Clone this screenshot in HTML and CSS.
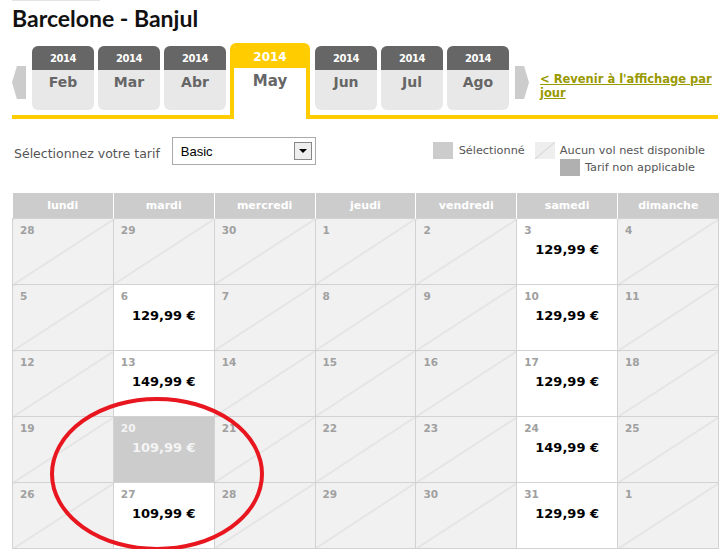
FILE: index.html
```html
<!DOCTYPE html>
<html>
<head>
<meta charset="UTF-8">
<title>Barcelone - Banjul</title>
<link rel="stylesheet" href="styles.css">
</head>
<body>

<div class="page">
  <div class="top-rule"></div>
  <h1 class="route">Barcelone - Banjul</h1>

  <div class="months">
    <div class="arrow arrow-left"></div>
    <div class="tab"><div class="tab-year">2014</div><div class="tab-month">Feb</div></div>
    <div class="tab"><div class="tab-year">2014</div><div class="tab-month">Mar</div></div>
    <div class="tab"><div class="tab-year">2014</div><div class="tab-month">Abr</div></div>
    <div class="tab tab-active"><div class="tab-year">2014</div><div class="tab-month">May</div></div>
    <div class="tab"><div class="tab-year">2014</div><div class="tab-month">Jun</div></div>
    <div class="tab"><div class="tab-year">2014</div><div class="tab-month">Jul</div></div>
    <div class="tab"><div class="tab-year">2014</div><div class="tab-month">Ago</div></div>
    <div class="arrow arrow-right"></div>
    <a class="back-link" href="#">&lt; Revenir à l'affichage par jour</a>
  </div>

  <div class="fare-row">
    <div class="fare-pick">
      <span class="fare-label">Sélectionnez votre tarif</span>
      <div class="fare-select">
        <span>Basic</span>
        <span class="fare-btn"><span class="fare-caret"></span></span>
      </div>
    </div>
    <div class="legend">
      <div class="legend-line">
        <span class="sw sw-selected"></span><span class="legend-text">Sélectionné</span>
        <span class="sw sw-none"></span><span class="legend-text">Aucun vol nest disponible</span>
      </div>
      <div class="legend-line legend-line-2">
        <span class="sw sw-na"></span><span class="legend-text">Tarif non applicable</span>
      </div>
    </div>
  </div>

  <table class="cal">
    <thead>
      <tr><th>lundi</th><th>mardi</th><th>mercredi</th><th>jeudi</th><th>vendredi</th><th>samedi</th><th>dimanche</th></tr>
    </thead>
    <tbody>
      <tr>
        <td class="off"><span class="day">28</span></td>
        <td class="off"><span class="day">29</span></td>
        <td class="off"><span class="day">30</span></td>
        <td class="off"><span class="day">1</span></td>
        <td class="off"><span class="day">2</span></td>
        <td><span class="day">3</span><div class="price">129,99 €</div></td>
        <td class="off"><span class="day">4</span></td>
      </tr>
      <tr>
        <td class="off"><span class="day">5</span></td>
        <td><span class="day">6</span><div class="price">129,99 €</div></td>
        <td class="off"><span class="day">7</span></td>
        <td class="off"><span class="day">8</span></td>
        <td class="off"><span class="day">9</span></td>
        <td><span class="day">10</span><div class="price">129,99 €</div></td>
        <td class="off"><span class="day">11</span></td>
      </tr>
      <tr>
        <td class="off"><span class="day">12</span></td>
        <td><span class="day">13</span><div class="price">149,99 €</div></td>
        <td class="off"><span class="day">14</span></td>
        <td class="off"><span class="day">15</span></td>
        <td class="off"><span class="day">16</span></td>
        <td><span class="day">17</span><div class="price">129,99 €</div></td>
        <td class="off"><span class="day">18</span></td>
      </tr>
      <tr>
        <td class="off"><span class="day">19</span></td>
        <td class="picked"><span class="day">20</span><div class="price">109,99 €</div></td>
        <td class="off"><span class="day">21</span></td>
        <td class="off"><span class="day">22</span></td>
        <td class="off"><span class="day">23</span></td>
        <td><span class="day">24</span><div class="price">149,99 €</div></td>
        <td class="off"><span class="day">25</span></td>
      </tr>
      <tr>
        <td class="off"><span class="day">26</span></td>
        <td><span class="day">27</span><div class="price">109,99 €</div></td>
        <td class="off"><span class="day">28</span></td>
        <td class="off"><span class="day">29</span></td>
        <td class="off"><span class="day">30</span></td>
        <td><span class="day">31</span><div class="price">129,99 €</div></td>
        <td class="off"><span class="day">1</span></td>
      </tr>
    </tbody>
  </table>

  <!-- hand-drawn circle around the cheap days -->
  <svg class="scribble" width="220" height="160" viewBox="0 0 220 160">
    <ellipse cx="107" cy="78" rx="105" ry="75" fill="none" stroke="#e8161f" stroke-width="4"/>
  </svg>
</div>

</body>
</html>
```

FILE: styles.css
```css
/* base */
body {
  margin: 0;
  font-family: "DejaVu Sans", Verdana, sans-serif;
  color: #555555;
  background: #ffffff;
}

.page {
  position: relative;
  padding: 0 10px 0 12px;
}

.top-rule {
  width: 88px;
  height: 1px;
  background: #e4e4e4;
}

.route {
  margin: 4px 0 0 0;
  font-family: Lato, "DejaVu Sans", sans-serif;
  font-size: 23px;
  font-weight: bold;
  line-height: 26px;
  color: #111111;
}

/* month tabs */
.months {
  display: flex;
  align-items: flex-start;
  height: 72px;
  margin-top: 12px;
  border-bottom: 4px solid #ffcc00;
}

.arrow {
  flex-shrink: 0;
  width: 14px;
  height: 33px;
  margin-top: 23px;
  background: #cccccc;
}

.arrow-left {
  margin-right: 6px;
  clip-path: polygon(35% 0, 100% 0, 100% 100%, 35% 100%, 0 50%);
}

.arrow-right {
  margin-left: 2px;
  clip-path: polygon(0 0, 65% 0, 100% 50%, 65% 100%, 0 100%);
}

.tab {
  flex-shrink: 0;
  width: 62px;
  height: 64px;
  margin: 3px 4px 0 0;
  border-radius: 6px;
  background: #e8e8e8;
  overflow: hidden;
  text-align: center;
  font-weight: bold;
}

.tab-year {
  height: 24px;
  line-height: 25px;
  background: #666666;
  color: #ffffff;
  font-size: 10px;
  letter-spacing: -0.4px;
}

.tab-month {
  padding-top: 4px;
  font-size: 14px;
  color: #666666;
}

.tab-active {
  width: 72px;
  height: 72px;
  margin: 0 5px -4px 0;
  border: 4px solid #ffcc00;
  border-bottom: 0;
  border-radius: 6px 6px 0 0;
  background: #ffffff;
}

.tab-active .tab-year {
  height: 21px;
  line-height: 20px;
  background: #ffcc00;
  font-size: 12px;
  letter-spacing: 0;
}

.tab-active .tab-month {
  padding-top: 4px;
  font-size: 15px;
}

.back-link {
  flex: 1;
  margin: 29px 0 0 11px;
  font-size: 11.5px;
  font-weight: bold;
  line-height: 14px;
  color: #999900;
}

/* fare picker + legend */
.fare-row {
  display: flex;
  justify-content: space-between;
  margin-top: 18px;
  height: 56px;
}

.fare-pick {
  display: flex;
  align-items: flex-start;
}

.fare-label {
  margin: 9px 12px 0 2px;
  font-size: 12.5px;
}

.fare-select {
  display: flex;
  align-items: center;
  justify-content: space-between;
  width: 131px;
  height: 26px;
  padding: 0 3px 0 8px;
  border: 1px solid #aaaaaa;
  font-family: "Liberation Sans", Arial, sans-serif;
  font-size: 13px;
  color: #000000;
}

.fare-btn {
  display: flex;
  align-items: center;
  justify-content: center;
  width: 16px;
  height: 16px;
  border: 1px solid #888888;
  background: #eeeeee;
}

.fare-caret {
  width: 0;
  height: 0;
  border-left: 4px solid transparent;
  border-right: 4px solid transparent;
  border-top: 4px solid #000000;
}

.legend {
  display: flex;
  flex-direction: column;
  align-items: flex-end;
  margin: 5px 13px 0 0;
  font-size: 11.3px;
  white-space: nowrap;
}

.legend-line {
  display: flex;
  align-items: center;
  height: 17px;
}

.legend-line-2 {
  margin-right: 10px;
}

.sw {
  width: 20px;
  height: 17px;
  margin-right: 6px;
}

.sw-selected {
  background: #cccccc;
}

.sw-none {
  margin-left: 10px;
  margin-right: 5px;
  background: linear-gradient(to bottom right, #eeeeee calc(50% - 1px), #d6d6d6 50%, #eeeeee calc(50% + 1px));
}

.sw-na {
  margin-right: 5px;
  background: #b0b0b0;
}

/* calendar */
.cal {
  width: 707px;
  border-collapse: collapse;
  table-layout: fixed;
}

.cal th {
  height: 25px;
  padding: 0;
  background: #cccccc;
  border-left: 1px solid #ffffff;
  color: #ffffff;
  font-size: 11px;
  font-weight: bold;
}

.cal th:first-child {
  border-left: 0;
}

.cal td {
  height: 65px;
  padding: 0;
  border: 1px solid #d2d2d2;
  vertical-align: top;
  background: #ffffff;
}

.cal td.off {
  background: linear-gradient(to bottom right, #f1f1f1 calc(50% - 1px), #d9d9d9 50%, #f1f1f1 calc(50% + 1px));
}

.cal td.picked {
  background: #cccccc;
}

.day {
  display: block;
  padding: 5px 0 0 7px;
  font-size: 10.5px;
  font-weight: bold;
  color: #a0a0a0;
}

.price {
  margin-top: 6px;
  text-align: center;
  font-size: 13px;
  font-weight: bold;
  color: #000000;
}

.picked .day,
.picked .price {
  color: #f4f4f4;
}

.scribble {
  position: absolute;
  left: 50px;
  top: 396px;
}
```
